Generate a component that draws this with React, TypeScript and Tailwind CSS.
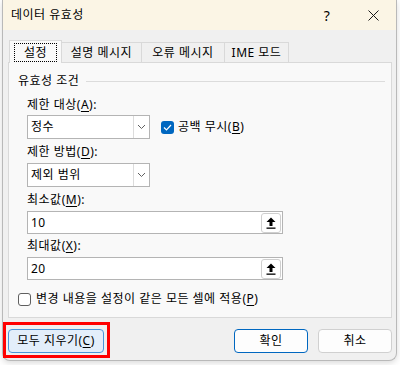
import React from "react";

const FONT = "font-['Noto_Sans','Noto_Sans_CJK_KR',sans-serif] tracking-[0.5px]";

function Chevron() {
  return (
    <svg width="9" height="6" viewBox="0 0 9 6" fill="none">
      <path d="M1 1 L4.5 4.5 L8 1" stroke="#606060" strokeWidth="1" />
    </svg>
  );
}

function UploadIcon() {
  return (
    <svg width="10" height="12" viewBox="0 0 10 12">
      <path d="M5 0.5 L9.5 5 L6.5 5 L6.5 9 L3.5 9 L3.5 5 L0.5 5 Z" fill="#000" />
      <rect x="0.5" y="10.5" width="9" height="1.3" fill="#000" />
    </svg>
  );
}

function Select({ value }: { value: string }) {
  return (
    <div className="flex h-[24px] w-[123px] border border-[#b4b4b4] bg-white">
      <div className="flex flex-1 items-center pl-[3px] text-[12px] text-black">{value}</div>
      <div className="flex w-[16px] items-center justify-center border-l border-[#dcdcdc]">
        <Chevron />
      </div>
    </div>
  );
}

function RangeInput({ value }: { value: string }) {
  return (
    <div className="flex h-[23px] w-[256px] items-center border border-[#b4b4b4] bg-white pr-[1px]">
      <div className="flex-1 pl-[3px] text-[12px] text-black">{value}</div>
      <div className="flex h-[20px] w-[20px] items-center justify-center rounded-[3px] border border-[#cfcfcf] bg-white">
        <UploadIcon />
      </div>
    </div>
  );
}

function Label({ text, mnemonic, rest = ":" }: { text: string; mnemonic: string; rest?: string }) {
  return (
    <div className="h-[16px] text-[12px] leading-[16px] text-black">
      {text}(<span className="underline underline-offset-2">{mnemonic}</span>){rest}
    </div>
  );
}

export default function App() {
  const tabs = ["설명 메시지", "오류 메시지", "IME 모드"];
  const tabWidths = ["w-[80px]", "w-[83px]", "w-[64px]"];

  return (
    <div className={`relative h-[365px] w-[400px] overflow-hidden bg-white ${FONT}`}>
      {/* Dialog window */}
      <div className="ml-[2px] flex h-[361px] w-[395px] flex-col overflow-hidden rounded-b-[8px] border border-t-0 border-[#b9b9b9] bg-[#f0f0f0] shadow-[0_2px_6px_rgba(0,0,0,0.15)]">
        {/* Title bar */}
        <div className="flex h-[30px] shrink-0 items-center bg-[#fbf5e5]">
          <div className="flex-1 pl-[8px] text-[12px] text-black">데이터 유효성</div>
          <div className="flex h-[30px] w-[46px] items-center justify-center text-[14px] text-black">?</div>
          <div className="flex h-[30px] w-[46px] items-center justify-center">
            <svg width="11" height="11" viewBox="0 0 11 11">
              <path d="M0.5 0.5 L10.5 10.5 M10.5 0.5 L0.5 10.5" stroke="#1a1a1a" strokeWidth="1" />
            </svg>
          </div>
        </div>

        <div className="flex flex-col pl-[5px] pr-[4px]">
          {/* Tabs */}
          <div className="mt-[10px] flex h-[22px] items-end pl-[1px]">
            <div className="relative z-10 mb-[-1px] flex h-[23px] w-[53px] items-center justify-center border border-b-0 border-[#d9d9d9] bg-[#f9f9f9]">
              <span className="border border-dotted border-black px-[9px] text-[12px] leading-[17px] text-black">설정</span>
            </div>
            {tabs.map((t, i) => (
              <div
                key={t}
                className={`flex h-[20px] items-center justify-center border border-b-0 border-l-0 border-[#d9d9d9] bg-[#f0f0f0] text-[12px] text-black ${tabWidths[i]}`}
              >
                {t}
              </div>
            ))}
          </div>

          {/* Tab panel */}
          <div className="flex h-[256px] flex-col border border-[#d9d9d9] bg-[#f9f9f9] pl-[9px] pr-[6px] pt-[10px]">
            <div className="flex h-[16px] items-center">
              <span className="text-[12px] leading-[16px] text-black">유효성 조건</span>
              <div className="ml-[7px] h-px flex-1 bg-[#dcdcdc]" />
            </div>

            <div className="flex flex-col pl-[9px]">
              <div className="mt-[8px]">
                <Label text="제한 대상" mnemonic="A" />
              </div>
              <div className="mt-[2px] flex items-center">
                <Select value="정수" />
                <div className="ml-[11px] flex h-[13px] w-[13px] items-center justify-center rounded-[3px] bg-[#0067c0]">
                  <svg width="9" height="7" viewBox="0 0 9 7" fill="none">
                    <path d="M1 3.5 L3.5 6 L8 1" stroke="#fff" strokeWidth="1.2" />
                  </svg>
                </div>
                <div className="ml-[4px]">
                  <Label text="공백 무시" mnemonic="B" rest="" />
                </div>
              </div>

              <div className="mt-[5px]">
                <Label text="제한 방법" mnemonic="D" />
              </div>
              <div className="mt-[3px]">
                <Select value="제외 범위" />
              </div>

              <div className="mt-[5px]">
                <Label text="최소값" mnemonic="M" />
              </div>
              <div className="mt-[3px]">
                <RangeInput value="10" />
              </div>

              <div className="mt-[4px]">
                <Label text="최대값" mnemonic="X" />
              </div>
              <div className="mt-[3px]">
                <RangeInput value="20" />
              </div>
            </div>

            <div className="mt-[11px] flex items-center">
              <div className="h-[13px] w-[13px] rounded-[3px] border border-[#5f5f5f] bg-white" />
              <div className="ml-[5px]">
                <Label text="변경 내용을 설정이 같은 모든 셀에 적용" mnemonic="P" rest="" />
              </div>
            </div>
          </div>

          {/* Buttons */}
          <div className="mt-[11px] flex h-[24px] items-center">
            <div className="flex h-[24px] w-[96px] items-center justify-center rounded-[4px] border border-[#4a95d8] bg-[#e3eefa] text-[12px] text-black">
              모두 지우기(<span className="underline underline-offset-2">C</span>)
            </div>
            <div className="flex-1" />
            <div className="flex h-[24px] w-[74px] items-center justify-center rounded-[4px] border border-[#0067c0] bg-[#fdfdfd] text-[12px] text-black">
              확인
            </div>
            <div className="ml-[10px] flex h-[24px] w-[74px] items-center justify-center rounded-[4px] border border-[#d0d0d0] bg-[#fdfdfd] text-[12px] text-black">
              취소
            </div>
          </div>
        </div>
      </div>

      {/* Red annotation box around the clear-all button */}
      <div className="absolute left-[3px] top-[322px] h-[36px] w-[107px] border-[3px] border-[#ff0000]" />
    </div>
  );
}
